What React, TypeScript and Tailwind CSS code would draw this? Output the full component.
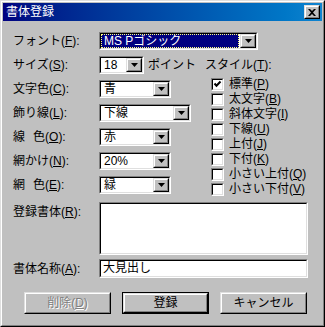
import React from "react";

const font = "font-['Liberation_Sans','Noto_Sans_CJK_JP',sans-serif]";

const styleOptions: { label: string; key: string; checked?: boolean }[] = [
  { label: "標準", key: "P", checked: true },
  { label: "太文字", key: "B" },
  { label: "斜体文字", key: "I" },
  { label: "下線", key: "U" },
  { label: "上付", key: "J" },
  { label: "下付", key: "K" },
  { label: "小さい上付", key: "Q" },
  { label: "小さい下付", key: "V" },
];

function Sunken({ className = "", children }: { className?: string; children?: React.ReactNode }) {
  return (
    <div className={`border border-t-[#808080] border-l-[#808080] border-b-white border-r-white ${className}`}>
      <div className="h-full flex border border-t-black border-l-black border-b-[#dfdfdf] border-r-[#dfdfdf] bg-white">
        {children}
      </div>
    </div>
  );
}

function Raised({ className = "", children }: { className?: string; children?: React.ReactNode }) {
  return (
    <div className={`border border-t-[#dfdfdf] border-l-[#dfdfdf] border-b-black border-r-black ${className}`}>
      <div className="h-full flex items-center justify-center border border-t-white border-l-white border-b-[#808080] border-r-[#808080] bg-[#c0c0c0]">
        {children}
      </div>
    </div>
  );
}

function DropButton() {
  return (
    <Raised className="w-[16px] h-full shrink-0">
      <svg width="7" height="4" viewBox="0 0 7 4">
        <path d="M0 0h7L3.5 4z" fill="#000" />
      </svg>
    </Raised>
  );
}

function Combo({ width, value, selected }: { width: string; value: string; selected?: boolean }) {
  return (
    <Sunken className={`${width} h-[18px] shrink-0`}>
      {selected ? (
        <div className="flex-1 pr-px">
          <div className="h-full bg-[#000080] text-white border border-dotted border-[#ffff80] pl-[2px] leading-[12px] text-[12px] overflow-hidden whitespace-nowrap">
            {value}
          </div>
        </div>
      ) : (
        <div className="flex-1 pl-[3px] text-[12px] leading-[14px] text-black overflow-hidden">{value}</div>
      )}
      <DropButton />
    </Sunken>
  );
}

function Label({ text, k, gap }: { text: string; k: string; gap?: boolean }) {
  return (
    <div className="w-[86px] shrink-0 text-[12px] leading-[18px] text-black whitespace-nowrap">
      {gap ? (
        <>
          {text[0]}
          <span className="inline-block w-[8px]" />
          {text.slice(1)}
        </>
      ) : (
        text
      )}
      (<u>{k}</u>):
    </div>
  );
}

function Checkbox({ label, k, checked }: { label: string; k: string; checked?: boolean }) {
  return (
    <div className="h-[15px] flex items-center gap-[5px]">
      <Sunken className="w-[13px] h-[13px] shrink-0">
        {checked && (
          <svg width="9" height="9" viewBox="0 0 9 9" className="block">
            <path d="M1.5 3.5l2 2.2 4-4.2" stroke="#000" strokeWidth="2" fill="none" />
          </svg>
        )}
      </Sunken>
      <span className="text-[12px] leading-[15px] text-black whitespace-nowrap">
        {label}(<u>{k}</u>)
      </span>
    </div>
  );
}

function Button({ children, isDefault, disabled }: { children: React.ReactNode; isDefault?: boolean; disabled?: boolean }) {
  const inner = (
    <Raised className="w-full h-full">
      <span
        className={`text-[12px] leading-[14px] ${
          disabled ? "text-[#808080] [text-shadow:1px_1px_0_#ffffff]" : "text-black"
        }`}
      >
        {children}
      </span>
    </Raised>
  );
  return isDefault ? (
    <div className="w-[87px] h-[22px] border border-black">{inner}</div>
  ) : (
    <div className="w-[87px] h-[22px]">{inner}</div>
  );
}

export default function App() {
  return (
    <div className={`${font} w-[325px] h-[327px] bg-[#c0c0c0] select-none`}>
      <div className="w-full h-full border border-t-[#dfdfdf] border-l-[#dfdfdf] border-b-black border-r-black">
        <div className="w-full h-full border border-t-white border-l-white border-b-[#808080] border-r-[#808080] p-px flex flex-col">
          {/* Title bar */}
          <div className="h-[18px] shrink-0 flex items-center justify-between bg-gradient-to-r from-[#000080] to-[#1084d0] pl-[3px] pr-[2px]">
            <span className="text-white text-[12px] leading-[18px]">書体登録</span>
            <Raised className="w-[16px] h-[14px]">
              <svg width="8" height="7" viewBox="0 0 8 7">
                <path d="M0 0h2l2 2 2-2h2L5 3.5 8 7H6L4 5 2 7H0l3-3.5z" fill="#000" />
              </svg>
            </Raised>
          </div>

          {/* Body */}
          <div className="pl-[10px] pt-[11px] flex flex-col">
            <div className="flex items-center h-[18px]">
              <Label text="フォント" k="F" />
              <Combo width="w-[159px]" value="MS Pゴシック" selected />
            </div>

            <div className="flex items-center h-[18px] mt-[6px]">
              <Label text="サイズ" k="S" />
              <Combo width="w-[45px]" value="18" />
              <span className="w-[61px] pl-[4px] text-[12px] leading-[18px] text-black">ポイント</span>
              <span className="text-[12px] leading-[18px] text-black">
                スタイル(<u>T</u>):
              </span>
            </div>

            <div className="flex mt-[3px]">
              <div className="w-[198px] pt-[3px] flex flex-col gap-[6px]">
                <div className="flex items-center h-[18px]">
                  <Label text="文字色" k="C" />
                  <Combo width="w-[72px]" value="青" />
                </div>
                <div className="flex items-center h-[18px]">
                  <Label text="飾り線" k="L" />
                  <Combo width="w-[92px]" value="下線" />
                </div>
                <div className="flex items-center h-[18px]">
                  <Label text="線色" k="O" gap />
                  <Combo width="w-[72px]" value="赤" />
                </div>
                <div className="flex items-center h-[18px]">
                  <Label text="網かけ" k="N" />
                  <Combo width="w-[72px]" value="20%" />
                </div>
                <div className="flex items-center h-[18px]">
                  <Label text="網色" k="E" gap />
                  <Combo width="w-[72px]" value="緑" />
                </div>
              </div>
              <div className="flex flex-col">
                {styleOptions.map((s) => (
                  <Checkbox key={s.key} label={s.label} k={s.key} checked={s.checked} />
                ))}
              </div>
            </div>

            <div className="flex mt-[5px]">
              <div className="w-[86px] pt-[3px] text-[12px] leading-[14px] text-black">
                登録書体(<u>R</u>):
              </div>
              <Sunken className="w-[209px] h-[53px]" />
            </div>

            <div className="flex items-center mt-[4px]">
              <Label text="書体名称" k="A" />
              <Sunken className="w-[209px] h-[19px]">
                <span className="pl-[2px] text-[12px] leading-[15px] text-black">大見出し</span>
              </Sunken>
            </div>

            <div className="flex mt-[14px] pl-[11px] gap-[11px]">
              <Button disabled>
                削除(<u>D</u>)
              </Button>
              <Button isDefault>登録</Button>
              <Button>キャンセル</Button>
            </div>
          </div>
        </div>
      </div>
    </div>
  );
}
